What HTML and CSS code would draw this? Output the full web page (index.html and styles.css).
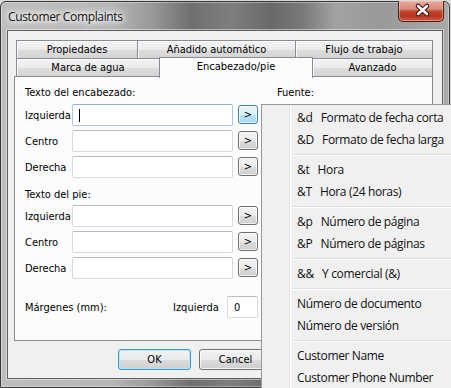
FILE: index.html
```html
<!DOCTYPE html>
<html>
<head>
<meta charset="utf-8">
<title>Customer Complaints</title>
<link rel="stylesheet" href="styles.css">
</head>
<body>
<div class="window">
  <div class="titlebar">
    <span class="title">Customer Complaints</span>
    <div class="close">
      <svg width="46" height="20" viewBox="0 0 46 20">
        <path d="M19 6 L28 14 M28 6 L19 14" stroke="#3b1a14" stroke-width="4.6" stroke-linecap="round" fill="none"/>
        <path d="M19 6 L28 14 M28 6 L19 14" stroke="#ffffff" stroke-width="2.4" stroke-linecap="round" fill="none"/>
      </svg>
    </div>
  </div>
  <div class="client">
    <div class="tabrow back">
      <div class="tab t-prop">Propiedades</div>
      <div class="tab t-auto">Añadido automático</div>
      <div class="tab t-flujo">Flujo de trabajo</div>
    </div>
    <div class="tabrow front">
      <div class="tab t-marca">Marca de agua</div>
      <div class="tab t-enc selected">Encabezado/pie</div>
      <div class="tab t-avz">Avanzado</div>
    </div>
    <div class="panel">
      <div class="head">
        <span class="head-left">Texto del encabezado:</span>
        <span>Fuente:</span>
      </div>
      <div class="fields">
        <span class="lbl">Izquierda</span>
        <div class="input focus"><span class="caret"></span></div>
        <div class="arrow hover">&gt;</div>
        <span class="lbl">Centro</span>
        <div class="input"></div>
        <div class="arrow">&gt;</div>
        <span class="lbl">Derecha</span>
        <div class="input"></div>
        <div class="arrow">&gt;</div>
      </div>
      <div class="head second">
        <span class="head-left">Texto del pie:</span>
      </div>
      <div class="fields second">
        <span class="lbl">Izquierda</span>
        <div class="input"></div>
        <div class="arrow">&gt;</div>
        <span class="lbl">Centro</span>
        <div class="input"></div>
        <div class="arrow">&gt;</div>
        <span class="lbl">Derecha</span>
        <div class="input"></div>
        <div class="arrow">&gt;</div>
      </div>
      <div class="margins">
        <span class="m-label">Márgenes (mm):</span>
        <span class="m-side">Izquierda</span>
        <div class="input small">0</div>
      </div>
    </div>
    <div class="dlg-buttons">
      <div class="btn default">OK</div>
      <div class="btn">Cancel</div>
    </div>
  </div>
</div>

<div class="menu">
  <div class="item">&amp;d   Formato de fecha corta</div>
  <div class="item">&amp;D   Formato de fecha larga</div>
  <div class="sep"></div>
  <div class="item">&amp;t   Hora</div>
  <div class="item">&amp;T   Hora (24 horas)</div>
  <div class="sep"></div>
  <div class="item">&amp;p   Número de página</div>
  <div class="item">&amp;P   Número de páginas</div>
  <div class="sep"></div>
  <div class="item">&amp;&amp;   Y comercial (&amp;)</div>
  <div class="sep"></div>
  <div class="item">Número de documento</div>
  <div class="item">Número de versión</div>
  <div class="sep"></div>
  <div class="item">Customer Name</div>
  <div class="item">Customer Phone Number</div>
</div>
</body>
</html>
```
FILE: styles.css
```css
* { box-sizing: border-box; }
html, body { margin: 0; padding: 0; }
body {
  width: 451px;
  height: 388px;
  overflow: hidden;
  background: #d9d9d9;
  padding-top: 1px;
  position: relative;
  font-family: "DejaVu Sans Condensed", "DejaVu Sans", sans-serif;
  font-stretch: condensed;
  font-size: 11px;
  color: #000;
}

.window {
  width: 450px;
  height: 387px;
  border: 1px solid #3a3a3a;
  border-radius: 6px 6px 0 0;
  padding: 0 6px 8px 6px;
  display: flex;
  flex-direction: column;
  background: linear-gradient(90deg, #bdbdbd 0px, #b6b6b6 110px, #9a9a9a 150px, #6f6f6f 190px, #7e7e7e 230px, #6a6a6a 270px, #787878 300px, #a2a2a2 335px, #999999 380px, #aaaaaa 450px);
  box-shadow: inset 0 0 0 1px rgba(255,255,255,0.35);
}

.titlebar {
  height: 28px;
  display: flex;
  align-items: flex-start;
  justify-content: space-between;
  padding-left: 1px;
}
.title {
  font-family: "Open Sans", "Noto Sans", sans-serif;
  font-stretch: normal;
  font-size: 12px;
  letter-spacing: -0.35px;
  line-height: 16px;
  margin-top: 7px;
  color: #111;
  text-shadow: 0 0 6px #fff, 0 0 10px #fff, 0 0 14px #fff, 0 0 4px rgba(255,255,255,0.9);
}
.close {
  width: 46px;
  height: 21px;
  margin-top: -1px;
  margin-right: -1px;
  border: 1px solid #4a2019;
  border-top: none;
  border-radius: 0 0 5px 5px;
  background: linear-gradient(#e6ab9e 0%, #d88a79 40%, #c4452f 52%, #b83520 75%, #cc5a42 100%);
  box-shadow: inset 0 0 0 1px rgba(255,210,200,0.45);
}
.close svg { display: block; margin-top: -1px; }

.client {
  flex: 1;
  background: #f0f0f0;
  border: 1px solid #5e5e5e;
  box-shadow: 0 0 0 1px rgba(255,255,255,0.45);
  padding: 9px 0 0 6px;
}

.tabrow {
  display: flex;
  height: 19px;
  margin-left: 2px;
  margin-bottom: -1px;
}
.tabrow.front { align-items: flex-end; }
.tab {
  height: 19px;
  border: 1px solid #898c95;
  background: linear-gradient(#f3f3f3 0%, #ebebeb 50%, #dddddd 51%, #d4d4d4 100%);
  box-shadow: inset 1px 1px 0 rgba(255,255,255,0.8);
  text-align: center;
  line-height: 17px;
  white-space: nowrap;
}
.tab + .tab { margin-left: -1px; }
.t-prop { width: 122px; }
.t-auto { width: 159px; }
.t-flujo { width: 138px; }
.t-marca { width: 144px; }
.t-enc { width: 154px; }
.t-avz { width: 121px; }
.tab.selected {
  height: 21px;
  margin-bottom: -1px;
  border-bottom: none;
  background: #fcfcfc;
  box-shadow: none;
  position: relative;
  z-index: 2;
  line-height: 17px;
}

.panel {
  position: relative;
  z-index: 1;
  width: 419px;
  height: 265px;
  border: 1px solid #898c95;
  background: #fcfcfc;
  padding: 8px 0 0 10px;
}
.head {
  display: flex;
  height: 16px;
  line-height: 16px;
}
.head-left { width: 252px; }
.head.second { margin-top: 9px; }

.fields {
  display: grid;
  grid-template-columns: 47px 161px 25px;
  grid-auto-rows: 22px;
  column-gap: 0;
  row-gap: 4px;
  margin-top: 3px;
  align-items: center;
}
.fields.second { margin-top: 2px; }
.lbl { white-space: nowrap; }

.input {
  height: 22px;
  border: 1px solid #d5dae1;
  border-top-color: #b5bcc6;
  border-radius: 2px;
  background: #fff;
  display: flex;
  align-items: center;
}
.input.focus { border-color: #aec6de; border-top-color: #8fb0d2; }
.caret {
  width: 1px;
  height: 13px;
  background: #000;
  margin-left: 6px;
}

.arrow {
  align-self: start;
  margin-top: 1px;
  margin-left: 5px;
  height: 19px;
  border: 1px solid #707070;
  border-radius: 3px;
  background: linear-gradient(#f2f2f2 0%, #ebebeb 50%, #dddddd 51%, #cfcfcf 100%);
  box-shadow: inset 0 0 0 1px rgba(255,255,255,0.7);
  text-align: center;
  line-height: 17px;
  font-size: 11px;
}
.arrow.hover {
  border-color: #3c7fb1;
  background: linear-gradient(#eaf6fd 0%, #d9f0fc 50%, #bee6fd 51%, #a7d9f5 100%);
}

.margins {
  display: flex;
  align-items: center;
  height: 22px;
  margin-top: 17px;
}
.m-label { width: 148px; }
.m-side { width: 54px; }
.input.small {
  width: 31px;
  padding-left: 6px;
}

.dlg-buttons {
  display: flex;
  gap: 8px;
  margin-top: 8px;
  padding-left: 104px;
}
.btn {
  width: 73px;
  height: 21px;
  border: 1px solid #707070;
  border-radius: 3px;
  background: linear-gradient(#f2f2f2 0%, #ebebeb 50%, #dddddd 51%, #cfcfcf 100%);
  box-shadow: inset 0 0 0 1px rgba(255,255,255,0.7);
  text-align: center;
  line-height: 19px;
}
.btn.default {
  border-color: #3399dd;
  box-shadow: inset 0 0 0 1px #b9e3f8;
}

.menu {
  position: absolute;
  z-index: 10;
  left: 261px;
  top: 104px;
  width: 200px;
  height: 300px;
  border: 1px solid #979797;
  padding: 2px;
  background:
    linear-gradient(90deg, transparent 27px, #e2e3e3 27px, #e2e3e3 28px, #ffffff 28px, #ffffff 29px, transparent 29px),
    #f0f0f0;
  font-family: "Open Sans", "Noto Sans", sans-serif;
  font-stretch: normal;
  font-size: 12px;
  letter-spacing: -0.35px;
  color: #111;
}
.item {
  height: 22px;
  line-height: 22px;
  padding-left: 33px;
  white-space: pre;
}
.sep {
  margin: 3px 0 3px 29px;
  border-top: 1px solid #e0e0e0;
  border-bottom: 1px solid #ffffff;
}
```
